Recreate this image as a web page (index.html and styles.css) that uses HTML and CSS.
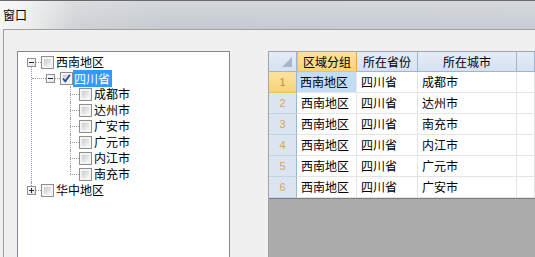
FILE: index.html
```
<!DOCTYPE html>
<html lang="zh-CN">
<head>
  <meta charset="UTF-8" />
  <title>窗口</title>
  <link rel="stylesheet" href="styles.css">
</head>
<body>
  <div class="window">
    <div class="titlebar">窗口</div>
    <div class="client">
      <div class="panel">

        <div class="tree">
          <ul class="root">
            <li>
              <div class="node">
                <span class="exp minus"></span><span class="hl"></span><span class="cb"></span><span class="label">西南地区</span>
              </div>
              <ul class="lvl1">
                <li>
                  <div class="node">
                    <span class="hl long"></span><span class="exp minus"></span><span class="hl"></span>
                    <span class="cb">
                      <svg width="11" height="11" viewBox="0 0 11 11"><polyline points="2,5.5 4.3,8.3 9,1.8" fill="none" stroke="#24479a" stroke-width="1.7"/></svg>
                    </span><span class="label sel">四川省</span>
                  </div>
                  <ul class="lvl2">
                    <li><div class="node leaf"><span class="hl leafline"></span><span class="cb"></span><span class="label">成都市</span></div></li>
                    <li><div class="node leaf"><span class="hl leafline"></span><span class="cb"></span><span class="label">达州市</span></div></li>
                    <li><div class="node leaf"><span class="hl leafline"></span><span class="cb"></span><span class="label">广安市</span></div></li>
                    <li><div class="node leaf"><span class="hl leafline"></span><span class="cb"></span><span class="label">广元市</span></div></li>
                    <li><div class="node leaf"><span class="hl leafline"></span><span class="cb"></span><span class="label">内江市</span></div></li>
                    <li><div class="node leaf"><span class="hl leafline"></span><span class="cb"></span><span class="label">南充市</span></div></li>
                  </ul>
                </li>
              </ul>
            </li>
            <li>
              <div class="node">
                <span class="exp plus"></span><span class="hl"></span><span class="cb"></span><span class="label">华中地区</span>
              </div>
            </li>
          </ul>
        </div>

        <div class="grid">
          <div class="row head">
            <div class="corner">
              <svg width="10" height="10" viewBox="0 0 10 10"><polygon points="10,0 10,10 0,10" fill="#a7b6c9"/></svg>
            </div>
            <div class="colhead active">区域分组</div>
            <div class="colhead">所在省份</div>
            <div class="colhead">所在城市</div>
            <div class="colhead"></div>
          </div>
          <div class="row">
            <div class="rowhead active">1</div>
            <div class="cell current">西南地区</div><div class="cell">四川省</div><div class="cell">成都市</div><div class="cell"></div>
          </div>
          <div class="row">
            <div class="rowhead">2</div>
            <div class="cell">西南地区</div><div class="cell">四川省</div><div class="cell">达州市</div><div class="cell"></div>
          </div>
          <div class="row">
            <div class="rowhead">3</div>
            <div class="cell">西南地区</div><div class="cell">四川省</div><div class="cell">南充市</div><div class="cell"></div>
          </div>
          <div class="row">
            <div class="rowhead">4</div>
            <div class="cell">西南地区</div><div class="cell">四川省</div><div class="cell">内江市</div><div class="cell"></div>
          </div>
          <div class="row">
            <div class="rowhead">5</div>
            <div class="cell">西南地区</div><div class="cell">四川省</div><div class="cell">广元市</div><div class="cell"></div>
          </div>
          <div class="row">
            <div class="rowhead">6</div>
            <div class="cell">西南地区</div><div class="cell">四川省</div><div class="cell">广安市</div><div class="cell"></div>
          </div>
          <div class="empty"></div>
        </div>

      </div>
    </div>
  </div>
</body>
</html>
```
FILE: styles.css
```
  * {
    margin: 0;
    padding: 0;
    box-sizing: border-box;
  }

  body {
    font-family: "Noto Sans CJK SC", "Liberation Sans", sans-serif;
    font-size: 12px;
    color: #000;
    background: #f0f0f0;
  }

  .window {
    width: 535px;
    height: 257px;
    overflow: hidden;
    display: flex;
    flex-direction: column;
  }

  .titlebar {
    height: 29px;
    flex-shrink: 0;
    border-top: 1px solid #6a6a6a;
    padding: 6px 0 0 3px;
    line-height: 16px;
    background:
      linear-gradient(rgba(255, 255, 255, 0.25), rgba(255, 255, 255, 0)),
      linear-gradient(to right, #f6f6f6 0, #f0f0f0 22px, #cfd2d6 75px, #c5cad0 170px, #c8cdd3 100%);
  }

  .client {
    flex: 1;
    padding-left: 3px;
    background: #f0f0f0;
    display: flex;
  }

  .panel {
    flex: 1;
    border-left: 1px solid #a0a0a0;
    border-top: 1px solid #a0a0a0;
    display: flex;
    gap: 38px;
    padding: 21px 0 0 13px;
  }

  /* tree view */
  .tree {
    width: 213px;
    height: 240px;
    flex-shrink: 0;
    background: #fff;
    border: 1px solid #828790;
    padding-top: 2px;
  }

  .tree ul {
    list-style: none;
  }

  .tree li {
    position: relative;
  }

  .root > li::before,
  .lvl2 > li::before {
    content: "";
    position: absolute;
    border-left: 1px dotted #9a9a9a;
  }

  .root > li::before {
    left: 13px;
  }

  .root > li:first-child::before {
    top: 12px;
    bottom: 0;
  }

  .root > li:last-child::before {
    top: 0;
    height: 4px;
  }

  .lvl1 {
    padding-left: 14px;
  }

  .lvl2 {
    padding-left: 24px;
  }

  .lvl2 > li::before {
    left: 14px;
    top: 0;
    bottom: 0;
  }

  .lvl2 > li:last-child::before {
    bottom: auto;
    height: 8px;
  }

  .node {
    height: 16px;
    display: flex;
    align-items: center;
    padding-left: 9px;
  }

  .lvl1 .node {
    padding-left: 0;
  }

  .lvl1 .node.leaf {
    padding-left: 14px;
  }

  .hl {
    width: 5px;
    border-top: 1px dotted #9a9a9a;
  }

  .hl.long {
    width: 14px;
  }

  .hl.leafline {
    width: 9px;
  }

  .exp {
    width: 9px;
    height: 9px;
    border: 1px solid #919191;
    background: linear-gradient(135deg, #ffffff, #e2e2e2);
    position: relative;
    flex-shrink: 0;
  }

  .exp::before {
    content: "";
    position: absolute;
    left: 1px;
    top: 3px;
    width: 5px;
    height: 1px;
    background: #1c2c4c;
  }

  .exp.plus::after {
    content: "";
    position: absolute;
    left: 3px;
    top: 1px;
    width: 1px;
    height: 5px;
    background: #1c2c4c;
  }

  .cb {
    width: 13px;
    height: 13px;
    flex-shrink: 0;
    border: 1px solid #8e8f8f;
    padding: 2px;
    background: linear-gradient(135deg, #cbcbcb, #f7f7f7) content-box, #f4f4f4;
    display: flex;
    align-items: center;
    justify-content: center;
  }

  .cb svg {
    margin: -2px;
  }

  .label {
    margin-left: 2px;
    line-height: 16px;
    white-space: nowrap;
  }

  .label.sel {
    margin-left: 0;
    padding: 0 2px 0 1px;
    line-height: 17px;
    background: #3399ff;
    color: #fff;
  }

  /* data grid */
  .grid {
    flex: 1;
    height: 240px;
    background: #ababab;
    border-left: 1px solid #a3a3a3;
    border-top: 1px solid #a3a3a3;
    display: flex;
    flex-direction: column;
  }

  .row {
    display: grid;
    grid-template-columns: 28px 60px 61px 99px 1fr;
    height: 21px;
    background: #fff;
  }

  .row.head {
    height: 20px;
  }

  .corner,
  .colhead {
    background: linear-gradient(#e4ecf7, #d6e2f2);
    border-right: 1px solid #9eb6ce;
    border-bottom: 1px solid #9eb6ce;
  }

  .corner {
    display: flex;
    align-items: flex-end;
    justify-content: flex-end;
    padding: 0 4px 4px 0;
  }

  .colhead {
    text-align: center;
    line-height: 19px;
  }

  .colhead.active {
    background: linear-gradient(#fbe1a0, #f8d37a);
    border-left: 1px solid #f1bd5c;
    border-right: 1px solid #e3a84a;
    border-bottom: 1px solid #f1c25c;
  }

  .rowhead {
    background: #dbe5f2;
    border-right: 1px solid #9eb6ce;
    border-bottom: 1px solid #c4d3e6;
    text-align: center;
    font-family: "Liberation Sans", sans-serif;
    font-size: 11px;
    line-height: 20px;
    color: #dca457;
  }

  .rowhead.active {
    background: linear-gradient(#fbe1a0, #f8d37a);
    border-bottom-color: #f1c25c;
    color: #c98b2e;
  }

  .cell {
    border-right: 1px solid #e4e4e4;
    border-bottom: 1px solid #e4e4e4;
    padding-left: 4px;
    line-height: 20px;
    white-space: nowrap;
  }

  .cell.current {
    background: #c4ddf7;
    padding-left: 3px;
  }

  .empty {
    flex: 1;
    border-top: 1px solid #7e7e7e;
  }
```
